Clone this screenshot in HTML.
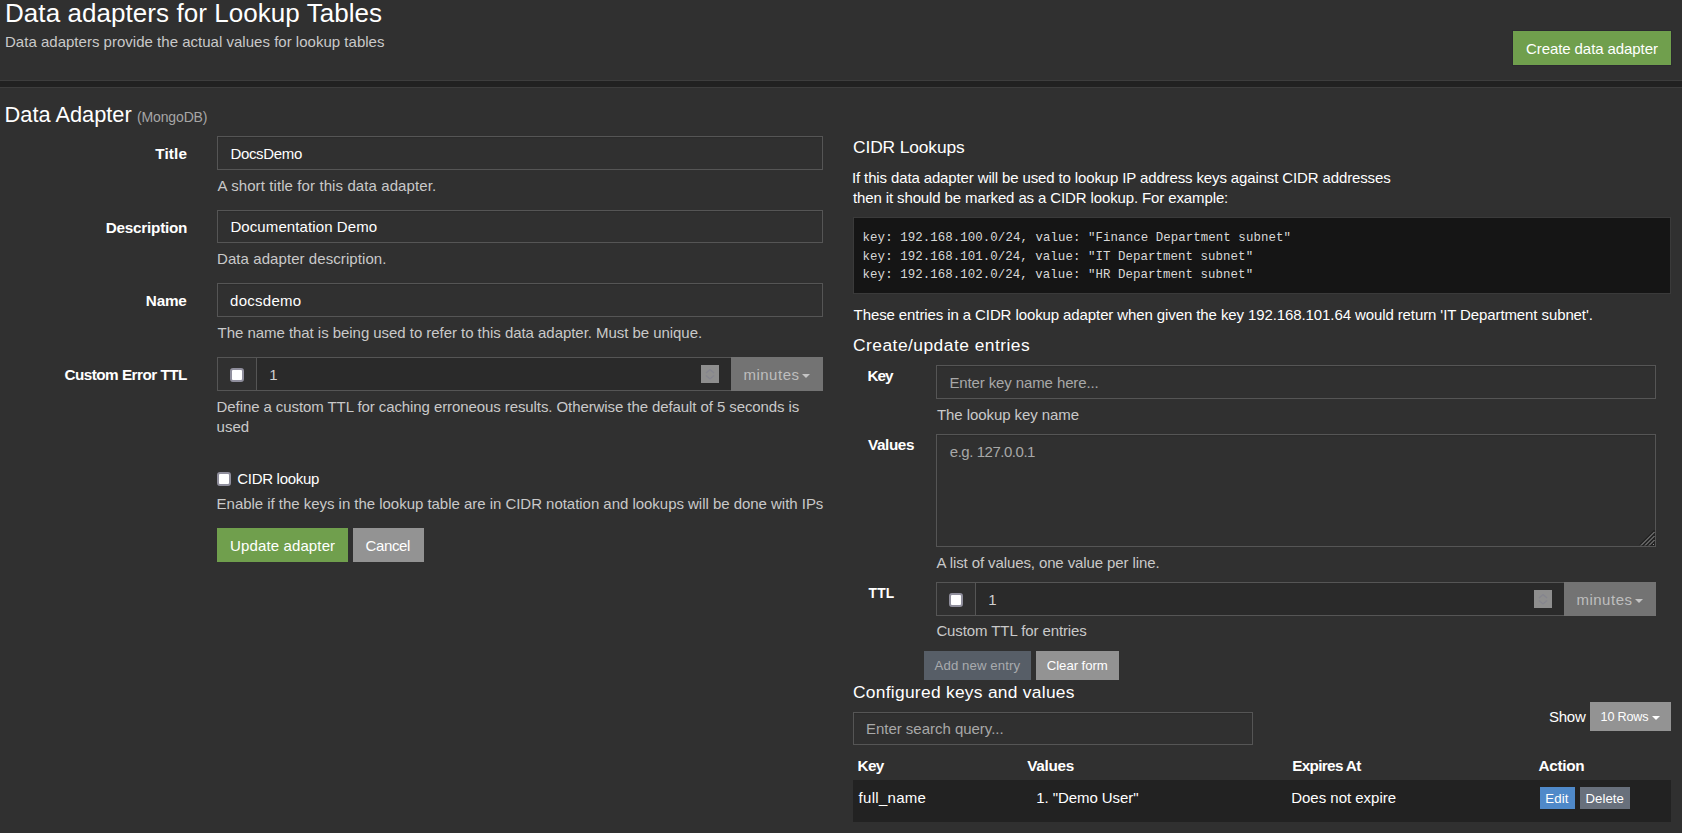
<!DOCTYPE html><html><head><meta charset="utf-8"><title>Data adapters for Lookup Tables</title><style>html,body{margin:0;padding:0;}body{width:1682px;height:833px;overflow:hidden;position:relative;background:#303030;font-family:"Liberation Sans",sans-serif;}</style></head><body><div style="position:absolute;left:0px;top:80px;width:1682px;height:1px;box-sizing:border-box;background:#3d3d3d"></div><div style="position:absolute;left:0px;top:81px;width:1682px;height:6px;box-sizing:border-box;background:#212121"></div><div style="position:absolute;left:0px;top:87px;width:1682px;height:1px;box-sizing:border-box;background:#3d3d3d"></div><div style="position:absolute;left:1512px;top:30px;width:160px;height:36px;box-sizing:border-box;background:#709f4d;border:1px solid #2b2a2f"></div><div style="position:absolute;left:217px;top:136px;width:606px;height:34px;box-sizing:border-box;background:#303030;border:1px solid #555555;box-shadow:inset 0 1px 1px rgba(0,0,0,.075)"></div><div style="position:absolute;left:217px;top:210px;width:606px;height:33px;box-sizing:border-box;background:#303030;border:1px solid #555555;box-shadow:inset 0 1px 1px rgba(0,0,0,.075)"></div><div style="position:absolute;left:217px;top:283px;width:606px;height:34px;box-sizing:border-box;background:#303030;border:1px solid #555555;box-shadow:inset 0 1px 1px rgba(0,0,0,.075)"></div><div style="position:absolute;left:217px;top:357px;width:515px;height:34px;box-sizing:border-box;background:#2a2a2a;border:1px solid #555555"></div><div style="position:absolute;left:217px;top:357px;width:40px;height:34px;box-sizing:border-box;background:#303030;border:1px solid #555555"></div><div style="position:absolute;left:230px;top:368px;width:14px;height:14px;box-sizing:border-box;border:2px solid #8f8e9c;border-radius:3px;background:#fff"></div><div style="position:absolute;left:701px;top:365px;width:18px;height:18px;box-sizing:border-box;background:#8e8e8e"></div><svg style="position:absolute;left:701px;top:365px" width="18" height="18"><path d="M5 8 L9 4.5 L13 8 M5 10.5 L9 14 L13 10.5" stroke="#85858e" stroke-width="1.3" fill="none"/></svg><div style="position:absolute;left:731px;top:357px;width:92px;height:34px;box-sizing:border-box;background:#737373"></div><div style="position:absolute;left:802px;top:374px;width:0;height:0;border-left:4px solid transparent;border-right:4px solid transparent;border-top:4px solid #c4c4c4"></div><div style="position:absolute;left:217px;top:472px;width:14px;height:14px;box-sizing:border-box;border:2px solid #8f8e9c;border-radius:3px;background:#fff"></div><div style="position:absolute;left:217px;top:528px;width:131px;height:34px;box-sizing:border-box;background:#709f4d"></div><div style="position:absolute;left:353px;top:528px;width:71px;height:34px;box-sizing:border-box;background:#939393"></div><div style="position:absolute;left:853px;top:217px;width:818px;height:77px;box-sizing:border-box;background:#151515;border:1px solid #3a3a3a"></div><div style="position:absolute;left:936px;top:365px;width:720px;height:34px;box-sizing:border-box;background:#303030;border:1px solid #555555;box-shadow:inset 0 1px 1px rgba(0,0,0,.075)"></div><div style="position:absolute;left:936px;top:434px;width:720px;height:113px;box-sizing:border-box;background:#303030;border:1px solid #555555;box-shadow:inset 0 1px 1px rgba(0,0,0,.075)"></div><svg style="position:absolute;left:1636px;top:527px" width="20" height="20"><polygon points="4,19 19,4 19,19" fill="#232323"/><path d="M4 17.5 L18.5 3" stroke="#1a1a1a" stroke-width="1"/><path d="M5 18.5 L18.5 5 M9 18.5 L18.5 9 M13 18.5 L18.5 13" stroke="#9c9c9c" stroke-width="1"/><rect x="17" y="17" width="1" height="1" fill="#8f8f8f"/></svg><div style="position:absolute;left:936px;top:582px;width:629px;height:34px;box-sizing:border-box;background:#2a2a2a;border:1px solid #555555"></div><div style="position:absolute;left:936px;top:582px;width:40px;height:34px;box-sizing:border-box;background:#303030;border:1px solid #555555"></div><div style="position:absolute;left:949px;top:593px;width:14px;height:14px;box-sizing:border-box;border:2px solid #8f8e9c;border-radius:3px;background:#fff"></div><div style="position:absolute;left:1534px;top:590px;width:18px;height:18px;box-sizing:border-box;background:#8e8e8e"></div><svg style="position:absolute;left:1534px;top:590px" width="18" height="18"><path d="M5 8 L9 4.5 L13 8 M5 10.5 L9 14 L13 10.5" stroke="#85858e" stroke-width="1.3" fill="none"/></svg><div style="position:absolute;left:1564px;top:582px;width:92px;height:34px;box-sizing:border-box;background:#737373"></div><div style="position:absolute;left:1635px;top:599px;width:0;height:0;border-left:4px solid transparent;border-right:4px solid transparent;border-top:4px solid #c4c4c4"></div><div style="position:absolute;left:924px;top:651px;width:107px;height:29px;box-sizing:border-box;background:#575e67"></div><div style="position:absolute;left:1036px;top:651px;width:83px;height:29px;box-sizing:border-box;background:#939393"></div><div style="position:absolute;left:853px;top:712px;width:400px;height:33px;box-sizing:border-box;background:#303030;border:1px solid #555555;box-shadow:inset 0 1px 1px rgba(0,0,0,.075)"></div><div style="position:absolute;left:1590px;top:702px;width:81px;height:29px;box-sizing:border-box;background:#939393"></div><div style="position:absolute;left:1652px;top:716px;width:0;height:0;border-left:4px solid transparent;border-right:4px solid transparent;border-top:4px solid #ffffff"></div><div style="position:absolute;left:853px;top:780px;width:818px;height:42px;box-sizing:border-box;background:#222222"></div><div style="position:absolute;left:1540px;top:787px;width:35px;height:22px;box-sizing:border-box;background:#4f89c9"></div><div style="position:absolute;left:1580px;top:787px;width:50px;height:22px;box-sizing:border-box;background:#68707c"></div><div style="position:absolute;left:5.00px;top:-4.00px;font-family:'Liberation Sans';font-weight:400;font-size:26px;line-height:34px;letter-spacing:0.060px;color:#ffffff;white-space:pre;">Data adapters for Lookup Tables</div><div style="position:absolute;left:5.00px;top:31.50px;font-family:'Liberation Sans';font-weight:400;font-size:15px;line-height:20px;letter-spacing:0.016px;color:#c9c9c9;white-space:pre;">Data adapters provide the actual values for lookup tables</div><div style="position:absolute;left:1526.00px;top:39.10px;font-family:'Liberation Sans';font-weight:400;font-size:15px;line-height:20px;letter-spacing:-0.083px;color:#ffffff;white-space:pre;">Create data adapter</div><div style="position:absolute;left:4.60px;top:101.00px;font-family:'Liberation Sans';font-weight:400;font-size:21.8px;line-height:28px;letter-spacing:-0.009px;color:#ffffff;white-space:pre;">Data Adapter</div><div style="position:absolute;left:137.00px;top:108.00px;font-family:'Liberation Sans';font-weight:400;font-size:14px;line-height:18px;letter-spacing:-0.137px;color:#a6a6a6;white-space:pre;">(MongoDB)</div><div style="position:absolute;left:155.20px;top:143.80px;font-family:'Liberation Sans';font-weight:700;font-size:15.3px;line-height:20px;letter-spacing:0.175px;color:#ffffff;white-space:pre;">Title</div><div style="position:absolute;left:230.40px;top:143.60px;font-family:'Liberation Sans';font-weight:400;font-size:15px;line-height:20px;letter-spacing:-0.329px;color:#ffffff;white-space:pre;">DocsDemo</div><div style="position:absolute;left:217.60px;top:175.70px;font-family:'Liberation Sans';font-weight:400;font-size:15px;line-height:20px;letter-spacing:0.097px;color:#c9c9c9;white-space:pre;">A short title for this data adapter.</div><div style="position:absolute;left:105.80px;top:217.70px;font-family:'Liberation Sans';font-weight:700;font-size:15.3px;line-height:20px;letter-spacing:-0.250px;color:#ffffff;white-space:pre;">Description</div><div style="position:absolute;left:230.40px;top:216.80px;font-family:'Liberation Sans';font-weight:400;font-size:15px;line-height:20px;letter-spacing:0.100px;color:#ffffff;white-space:pre;">Documentation Demo</div><div style="position:absolute;left:217.00px;top:248.50px;font-family:'Liberation Sans';font-weight:400;font-size:15px;line-height:20px;letter-spacing:0.075px;color:#c9c9c9;white-space:pre;">Data adapter description.</div><div style="position:absolute;left:145.80px;top:291.00px;font-family:'Liberation Sans';font-weight:700;font-size:15.3px;line-height:20px;letter-spacing:-0.200px;color:#ffffff;white-space:pre;">Name</div><div style="position:absolute;left:230.00px;top:291.00px;font-family:'Liberation Sans';font-weight:400;font-size:15px;line-height:20px;letter-spacing:0.286px;color:#ffffff;white-space:pre;">docsdemo</div><div style="position:absolute;left:217.60px;top:323.00px;font-family:'Liberation Sans';font-weight:400;font-size:15px;line-height:20px;letter-spacing:-0.045px;color:#c9c9c9;white-space:pre;">The name that is being used to refer to this data adapter. Must be unique.</div><div style="position:absolute;left:64.40px;top:364.70px;font-family:'Liberation Sans';font-weight:700;font-size:15.3px;line-height:20px;letter-spacing:-0.527px;color:#ffffff;white-space:pre;">Custom Error TTL</div><div style="position:absolute;left:269.20px;top:364.70px;font-family:'Liberation Sans';font-weight:400;font-size:15px;line-height:20px;letter-spacing:0.000px;color:#d0d0d0;white-space:pre;">1</div><div style="position:absolute;left:743.40px;top:364.80px;font-family:'Liberation Sans';font-weight:400;font-size:15px;line-height:20px;letter-spacing:0.517px;color:#bebebe;white-space:pre;">minutes</div><div style="position:absolute;left:216.60px;top:396.60px;font-family:'Liberation Sans';font-weight:400;font-size:15px;line-height:20px;letter-spacing:-0.087px;color:#c9c9c9;white-space:pre;">Define a custom TTL for caching erroneous results. Otherwise the default of 5 seconds is</div><div style="position:absolute;left:216.60px;top:416.50px;font-family:'Liberation Sans';font-weight:400;font-size:15px;line-height:20px;letter-spacing:0.000px;color:#c9c9c9;white-space:pre;">used</div><div style="position:absolute;left:237.20px;top:469.00px;font-family:'Liberation Sans';font-weight:400;font-size:15px;line-height:20px;letter-spacing:-0.280px;color:#ffffff;white-space:pre;">CIDR lookup</div><div style="position:absolute;left:216.60px;top:493.50px;font-family:'Liberation Sans';font-weight:400;font-size:15px;line-height:20px;letter-spacing:-0.030px;color:#c9c9c9;white-space:pre;">Enable if the keys in the lookup table are in CIDR notation and lookups will be done with IPs</div><div style="position:absolute;left:230.00px;top:536.00px;font-family:'Liberation Sans';font-weight:400;font-size:15px;line-height:20px;letter-spacing:0.131px;color:#ffffff;white-space:pre;">Update adapter</div><div style="position:absolute;left:365.60px;top:536.00px;font-family:'Liberation Sans';font-weight:400;font-size:15px;line-height:20px;letter-spacing:-0.380px;color:#ffffff;white-space:pre;">Cancel</div><div style="position:absolute;left:853.00px;top:136.20px;font-family:'Liberation Sans';font-weight:400;font-size:17.4px;line-height:23px;letter-spacing:-0.127px;color:#ffffff;white-space:pre;">CIDR Lookups</div><div style="position:absolute;left:852.00px;top:167.70px;font-family:'Liberation Sans';font-weight:400;font-size:15px;line-height:20px;letter-spacing:-0.130px;color:#ffffff;white-space:pre;">If this data adapter will be used to lookup IP address keys against CIDR addresses</div><div style="position:absolute;left:853.00px;top:187.60px;font-family:'Liberation Sans';font-weight:400;font-size:15px;line-height:20px;letter-spacing:-0.122px;color:#ffffff;white-space:pre;">then it should be marked as a CIDR lookup. For example:</div><div style="position:absolute;left:862.60px;top:229.90px;font-family:'Liberation Mono';font-weight:400;font-size:12.4px;line-height:16px;letter-spacing:0.080px;color:#d8d8d8;white-space:pre;">key: 192.168.100.0/24, value: "Finance Department subnet"</div><div style="position:absolute;left:862.60px;top:248.70px;font-family:'Liberation Mono';font-weight:400;font-size:12.4px;line-height:16px;letter-spacing:0.075px;color:#d8d8d8;white-space:pre;">key: 192.168.101.0/24, value: "IT Department subnet"</div><div style="position:absolute;left:862.60px;top:266.90px;font-family:'Liberation Mono';font-weight:400;font-size:12.4px;line-height:16px;letter-spacing:0.075px;color:#d8d8d8;white-space:pre;">key: 192.168.102.0/24, value: "HR Department subnet"</div><div style="position:absolute;left:853.60px;top:304.70px;font-family:'Liberation Sans';font-weight:400;font-size:15px;line-height:20px;letter-spacing:-0.100px;color:#ffffff;white-space:pre;">These entries in a CIDR lookup adapter when given the key 192.168.101.64 would return 'IT Department subnet'.</div><div style="position:absolute;left:853.00px;top:333.60px;font-family:'Liberation Sans';font-weight:400;font-size:17.4px;line-height:23px;letter-spacing:0.470px;color:#ffffff;white-space:pre;">Create/update entries</div><div style="position:absolute;left:867.60px;top:366.10px;font-family:'Liberation Sans';font-weight:700;font-size:15.3px;line-height:20px;letter-spacing:-1.100px;color:#ffffff;white-space:pre;">Key</div><div style="position:absolute;left:949.40px;top:372.50px;font-family:'Liberation Sans';font-weight:400;font-size:15px;line-height:20px;letter-spacing:-0.114px;color:#a8a8a8;white-space:pre;">Enter key name here...</div><div style="position:absolute;left:937.00px;top:404.50px;font-family:'Liberation Sans';font-weight:400;font-size:15px;line-height:20px;letter-spacing:-0.078px;color:#c9c9c9;white-space:pre;">The lookup key name</div><div style="position:absolute;left:868.00px;top:434.50px;font-family:'Liberation Sans';font-weight:700;font-size:15.3px;line-height:20px;letter-spacing:-0.400px;color:#ffffff;white-space:pre;">Values</div><div style="position:absolute;left:949.80px;top:441.60px;font-family:'Liberation Sans';font-weight:400;font-size:15px;line-height:20px;letter-spacing:-0.469px;color:#a8a8a8;white-space:pre;">e.g. 127.0.0.1</div><div style="position:absolute;left:936.60px;top:552.60px;font-family:'Liberation Sans';font-weight:400;font-size:15px;line-height:20px;letter-spacing:-0.106px;color:#c9c9c9;white-space:pre;">A list of values, one value per line.</div><div style="position:absolute;left:868.60px;top:584.90px;font-family:'Liberation Sans';font-weight:700;font-size:13.8px;line-height:18px;letter-spacing:0.150px;color:#ffffff;white-space:pre;">TTL</div><div style="position:absolute;left:988.20px;top:590.00px;font-family:'Liberation Sans';font-weight:400;font-size:15px;line-height:20px;letter-spacing:0.000px;color:#d0d0d0;white-space:pre;">1</div><div style="position:absolute;left:1576.40px;top:589.80px;font-family:'Liberation Sans';font-weight:400;font-size:15px;line-height:20px;letter-spacing:0.517px;color:#bebebe;white-space:pre;">minutes</div><div style="position:absolute;left:936.40px;top:621.00px;font-family:'Liberation Sans';font-weight:400;font-size:15px;line-height:20px;letter-spacing:-0.100px;color:#c9c9c9;white-space:pre;">Custom TTL for entries</div><div style="position:absolute;left:934.60px;top:656.80px;font-family:'Liberation Sans';font-weight:400;font-size:13.2px;line-height:17px;letter-spacing:0.092px;color:#a9abae;white-space:pre;">Add new entry</div><div style="position:absolute;left:1046.80px;top:656.80px;font-family:'Liberation Sans';font-weight:400;font-size:13.2px;line-height:17px;letter-spacing:-0.067px;color:#ffffff;white-space:pre;">Clear form</div><div style="position:absolute;left:853.00px;top:681.00px;font-family:'Liberation Sans';font-weight:400;font-size:17.4px;line-height:23px;letter-spacing:0.276px;color:#ffffff;white-space:pre;">Configured keys and values</div><div style="position:absolute;left:866.00px;top:718.80px;font-family:'Liberation Sans';font-weight:400;font-size:15px;line-height:20px;letter-spacing:-0.025px;color:#a8a8a8;white-space:pre;">Enter search query...</div><div style="position:absolute;left:1549.00px;top:707.00px;font-family:'Liberation Sans';font-weight:400;font-size:15px;line-height:20px;letter-spacing:-0.267px;color:#ffffff;white-space:pre;">Show</div><div style="position:absolute;left:1600.60px;top:709.20px;font-family:'Liberation Sans';font-weight:400;font-size:12.6px;line-height:16px;letter-spacing:-0.167px;color:#ffffff;white-space:pre;">10 Rows</div><div style="position:absolute;left:857.60px;top:756.00px;font-family:'Liberation Sans';font-weight:700;font-size:15.3px;line-height:20px;letter-spacing:-0.750px;color:#ffffff;white-space:pre;">Key</div><div style="position:absolute;left:1027.20px;top:756.00px;font-family:'Liberation Sans';font-weight:700;font-size:15.3px;line-height:20px;letter-spacing:-0.300px;color:#ffffff;white-space:pre;">Values</div><div style="position:absolute;left:1292.20px;top:756.40px;font-family:'Liberation Sans';font-weight:700;font-size:15.3px;line-height:20px;letter-spacing:-0.667px;color:#ffffff;white-space:pre;">Expires At</div><div style="position:absolute;left:1538.60px;top:756.40px;font-family:'Liberation Sans';font-weight:700;font-size:15.3px;line-height:20px;letter-spacing:-0.320px;color:#ffffff;white-space:pre;">Action</div><div style="position:absolute;left:858.60px;top:788.40px;font-family:'Liberation Sans';font-weight:400;font-size:15px;line-height:20px;letter-spacing:0.288px;color:#ffffff;white-space:pre;">full_name</div><div style="position:absolute;left:1036.20px;top:787.60px;font-family:'Liberation Sans';font-weight:400;font-size:15px;line-height:20px;letter-spacing:-0.069px;color:#ffffff;white-space:pre;">1. "Demo User"</div><div style="position:absolute;left:1291.20px;top:787.80px;font-family:'Liberation Sans';font-weight:400;font-size:15px;line-height:20px;letter-spacing:-0.014px;color:#ffffff;white-space:pre;">Does not expire</div><div style="position:absolute;left:1545.20px;top:789.80px;font-family:'Liberation Sans';font-weight:400;font-size:13.2px;line-height:17px;letter-spacing:0.167px;color:#ffffff;white-space:pre;">Edit</div><div style="position:absolute;left:1585.60px;top:789.80px;font-family:'Liberation Sans';font-weight:400;font-size:13.2px;line-height:17px;letter-spacing:0.000px;color:#ffffff;white-space:pre;">Delete</div></body></html>
